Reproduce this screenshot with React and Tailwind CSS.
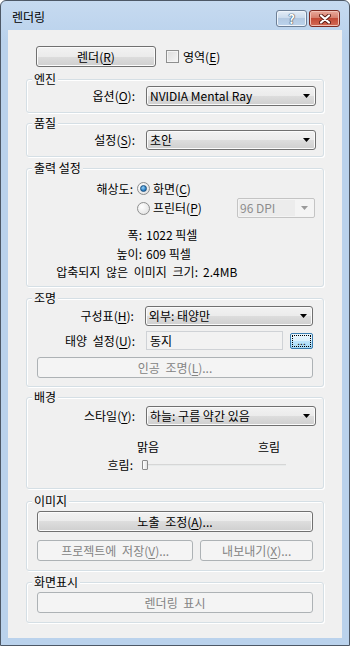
import React from 'react';

const btnBg = 'bg-[linear-gradient(#f2f2f2,#ebebeb_50%,#dddddd_50%,#cfcfcf)]';

function Btn({ children, disabled, className = '' }) {
  return (
    <div
      className={`flex items-center justify-center rounded-[3px] border ${
        disabled
          ? 'border-[#adb2b5] bg-[#f4f4f4] text-[#838383]'
          : `border-[#707070] ${btnBg} text-black shadow-[inset_0_0_0_1px_#fbfbfb]`
      } ${className}`}
    >
      {children}
    </div>
  );
}

function Arrow({ color = '#000' }) {
  return (
    <svg width="8" height="4" viewBox="0 0 8 4" className="shrink-0">
      <path d="M0 0h7L3.5 4z" fill={color} />
    </svg>
  );
}

function Combo({ value, className = '' }) {
  return (
    <div
      className={`flex h-[20px] items-center rounded-[3px] border border-[#707070] ${btnBg} pl-[3px] pr-[4px] shadow-[inset_0_0_0_1px_#fbfbfb] ${className}`}
    >
      <span className="flex-1 whitespace-nowrap">{value}</span>
      <Arrow />
    </div>
  );
}

function Group({ title, className = '', children }) {
  return (
    <div
      className={`relative mx-[18px] rounded-[3px] border border-[#d5dfe5] shadow-[inset_1px_1px_0_#fff,1px_1px_0_#fff] ${className}`}
    >
      <span className="absolute left-[5px] top-[-8px] bg-[#f0f0f0] px-[2px] leading-[14px]">{title}</span>
      {children}
    </div>
  );
}

function Radio({ checked }) {
  return (
    <div className="flex h-[13px] w-[13px] shrink-0 items-center justify-center rounded-full border border-[#8e8f8f] bg-[radial-gradient(circle_at_35%_35%,#ffffff,#dcdcdc)]">
      {checked && (
        <div className="h-[7px] w-[7px] rounded-full border border-[#1c5180] bg-[radial-gradient(circle_at_40%_35%,#9ad2f6,#2a7fc4_60%,#175b9c)]" />
      )}
    </div>
  );
}

const M = ({ children }) => <u className="underline-offset-[2px]">{children}</u>;

export default function App() {
  return (
    <div
      className="h-[646px] w-[350px] overflow-hidden rounded-t-[6px] border border-[#4d5866] bg-[linear-gradient(#c6daf0,#bad2ec_40px,#bad2ec)] text-[12px] text-black"
      style={{ fontFamily: '"Noto Sans CJK KR", "Noto Sans", sans-serif' }}
    >
      {/* title bar */}
      <div className="flex h-[29px] items-start pl-[11px] pr-[9px]">
        <span className="mt-[8px] flex-1 leading-[16px]">렌더링</span>
        <div className="mt-[9px] flex gap-[2px]">
          <div className="flex h-[17px] w-[31px] items-center justify-center rounded-[3px] border border-[#6d7f96] bg-[linear-gradient(#e4edf7,#c8d9ec_50%,#b3c9e2_50%,#bcd3ec)] shadow-[inset_0_0_0_1px_#eef4fb]">
            <span className="text-[13px] font-bold leading-none text-white [text-shadow:0_0_1px_#3a4a5e,0_0_1px_#3a4a5e,0_0_1px_#3a4a5e]">?</span>
          </div>
          <div className="flex h-[17px] w-[31px] items-center justify-center rounded-[3px] border border-[#7d2a21] bg-[linear-gradient(#e9a99b,#d47a68_50%,#c24a36_50%,#d36a55)] shadow-[inset_0_0_0_1px_#f0c0b5]">
            <svg width="12" height="10" viewBox="0 0 12 10">
              <path d="M2 1.5l8 7M10 1.5l-8 7" stroke="#5a1c14" strokeWidth="4" strokeLinecap="round" />
              <path d="M2 1.5l8 7M10 1.5l-8 7" stroke="#fff" strokeWidth="2.2" strokeLinecap="round" />
            </svg>
          </div>
        </div>
      </div>

      {/* client area */}
      <div className="mx-[7px] h-[608px] bg-[#f0f0f0] pt-[16px]">
        <div className="flex h-[21px] items-center pl-[28px]">
          <Btn className="h-[21px] w-[120px]">
            렌더(<M>R</M>)
          </Btn>
          <div className="ml-[10px] h-[13px] w-[13px] border border-[#8e8f8f] bg-[linear-gradient(135deg,#dcdcdc,#f6f6f6)] shadow-[inset_0_0_0_1px_#f4f4f4]" />
          <span className="ml-[4px]">
            영역(<M>E</M>)
          </span>
        </div>

        <Group title="엔진" className="mt-[12px] h-[34px] pt-[6px]">
          <div className="flex items-center">
            <span className="w-[108px] text-right">
              옵션(<M>O</M>):
            </span>
            <Combo value="NVIDIA Mental Ray" className="ml-[11px] w-[170px]" />
          </div>
        </Group>

        <Group title="품질" className="mt-[10px] h-[34px] pt-[6px]">
          <div className="flex items-center">
            <span className="w-[108px] text-right">
              설정(<M>S</M>):
            </span>
            <Combo value="초안" className="ml-[11px] w-[170px]" />
          </div>
        </Group>

        <Group title="출력 설정" className="mt-[11px] h-[119px] pt-[10px]">
          <div className="flex h-[19px] items-center">
            <span className="w-[106px] text-right">해상도:</span>
            <div className="ml-[4px]">
              <Radio checked />
            </div>
            <span className="ml-[3px]">
              화면(<M>C</M>)
            </span>
          </div>
          <div className="flex h-[20px] items-center pr-[8px]">
            <div className="ml-[110px]">
              <Radio />
            </div>
            <span className="ml-[3px]">
              프린터(<M>P</M>)
            </span>
            <div className="ml-auto flex h-[20px] w-[78px] items-center rounded-[2px] border border-[#c4c4c4] bg-[#f4f4f4] pl-[1px] pr-[5px]">
              <span className="mr-[6px] flex h-[16px] flex-1 items-center bg-[#ececec] pl-[1px] text-[#8d8d8d]">96 DPI</span>
              <Arrow color="#9a9a9a" />
            </div>
          </div>
          <div className="mt-[8px] flex h-[18px] items-center">
            <span className="w-[115px] text-right">폭:</span>
            <span className="ml-[4px]">1022 픽셀</span>
          </div>
          <div className="mt-[1px] flex h-[18px] items-center">
            <span className="w-[115px] text-right">높이:</span>
            <span className="ml-[4px]">609 픽셀</span>
          </div>
          <div className="flex h-[18px] items-center">
            <span className="w-[171px] whitespace-nowrap text-right [word-spacing:3px]">압축되지 않은 이미지 크기:</span>
            <span className="ml-[5px]">2.4MB</span>
          </div>
        </Group>

        <Group title="조명" className="mt-[11px] h-[89px] px-[10px] pt-[7px]">
          <div className="flex items-center">
            <span className="w-[98px] text-right">
              구성표(<M>H</M>):
            </span>
            <Combo value="외부: 태양만" className="ml-[11px] w-[170px]" />
          </div>
          <div className="mt-[5px] flex items-center">
            <span className="w-[98px] whitespace-nowrap text-right [word-spacing:3px]">
              태양 설정(<M>U</M>):
            </span>
            <div className="ml-[11px] flex h-[19px] w-[137px] items-center border border-[#cfd2d6] bg-[#f2f2f2] pl-[3px]">동지</div>
            <div className="ml-[7px] flex h-[16px] w-[23px] items-center justify-center rounded-[2px] border border-[#3c7fb1] bg-[linear-gradient(#eaf6fd,#d9f0fc_50%,#bee6fd_50%,#a7d9f5)] p-[1px]">
              <div className="flex h-full w-full items-end justify-center border border-dotted border-[#000] pb-[1px] text-[10px] leading-[8px]">...</div>
            </div>
          </div>
          <Btn disabled className="mt-[7px] h-[21px] w-[276px] [word-spacing:3px]">
            인공 조명(<M>L</M>)...
          </Btn>
        </Group>

        <Group title="배경" className="mt-[10px] h-[92px] pt-[8px]">
          <div className="flex items-center">
            <span className="w-[108px] text-right">
              스타일(<M>Y</M>):
            </span>
            <Combo value="하늘: 구름 약간 있음" className="ml-[11px] w-[170px]" />
          </div>
          <div className="mt-[14px] flex h-[14px] items-center pl-[110px]">
            <span className="w-[121px]">맑음</span>
            <span>흐림</span>
          </div>
          <div className="mt-[4px] flex h-[14px] items-center">
            <span className="w-[106px] text-right">흐림:</span>
            <div className="relative ml-[9px] flex h-[10px] w-[144px] items-center">
              <div className="h-[2px] w-full border-t border-[#d6d6d6] bg-[#e7eaea]" />
              <div className="absolute left-0 top-0 h-[10px] w-[6px] rounded-[1px] border border-[#8a8a8a] bg-[linear-gradient(90deg,#ffffff,#e3e3e3)]" />
            </div>
          </div>
        </Group>

        <Group title="이미지" className="mt-[12px] h-[70px] px-[10px] pt-[9px]">
          <Btn className="h-[21px] w-[276px] [word-spacing:3px]">
            노출 조정(<M>A</M>)...
          </Btn>
          <div className="mt-[8px] flex gap-[7px]">
            <Btn disabled className="h-[21px] w-[157px] [word-spacing:3px]">
              프로젝트에 저장(<M>V</M>)...
            </Btn>
            <Btn disabled className="h-[21px] w-[113px]">
              내보내기(<M>X</M>)...
            </Btn>
          </div>
        </Group>

        <Group title="화면표시" className="mt-[11px] h-[41px] px-[10px] pt-[9px]">
          <Btn disabled className="h-[21px] w-[276px] [word-spacing:3px]">
            렌더링 표시
          </Btn>
        </Group>
      </div>
    </div>
  );
}
